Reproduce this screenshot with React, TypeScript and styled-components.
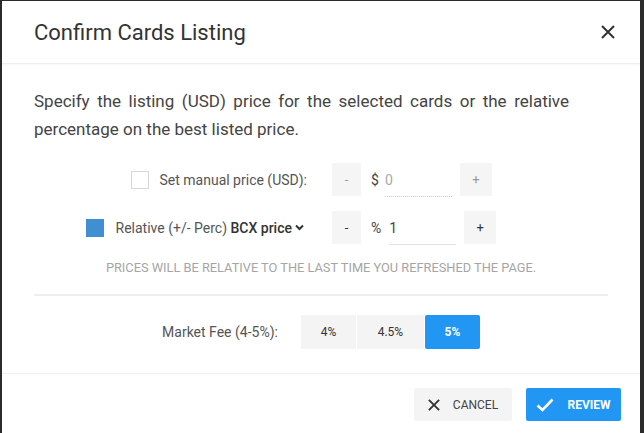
import styled, {createGlobalStyle} from 'styled-components';

const GlobalStyle = createGlobalStyle`
  html, body {
    margin: 0;
    padding: 0;
    background: #2b2b2b;
    font-family: Roboto, "Liberation Sans", sans-serif;
  }
`;

const Modal = styled.div`
  margin: 1px 0 0 2px;
  width: 638px;
  height: 440px;
  background: #fff;
  display: flex;
  flex-direction: column;
`;

const Header = styled.div`
  height: 62px;
  display: flex;
  align-items: center;
  justify-content: space-between;
  padding: 0 25px 0 32px;
  border-bottom: 1px solid #efefef;
  box-shadow: 0 1px 2px rgba(0, 0, 0, 0.04);
`;

const Title = styled.h2`
  margin: 0;
  font-size: 22px;
  font-weight: 400;
  color: #333;
`;

const CloseButton = styled.button`
  border: 0;
  background: none;
  padding: 0;
  width: 14px;
  height: 14px;
  display: flex;
  cursor: pointer;
`;

const Body = styled.div`
  padding: 23px 32px 24px;
`;

const Intro = styled.p`
  margin: 0;
  width: 535px;
  text-align: justify;
  font-size: 17px;
  line-height: 28px;
  color: #444;
`;

const PriceRow = styled.div<{$first?: boolean}>`
  display: grid;
  grid-template-columns: 273px auto;
  column-gap: 25px;
  align-items: center;
  height: 33px;
  margin-top: ${p => (p.$first ? '19px' : '15px')};
`;

const Option = styled.label`
  justify-self: end;
  display: flex;
  align-items: center;
  gap: 11px;
  font-size: 14px;
  color: #555;
`;

const Box = styled.span<{$checked?: boolean}>`
  width: 18px;
  height: 18px;
  box-sizing: border-box;
  border: 1px solid ${p => (p.$checked ? '#3f8fd2' : '#d6d6d6')};
  background: ${p => (p.$checked ? '#3f8fd2' : '#fff')};
  margin-right: ${p => (p.$checked ? '1px' : '0')};
`;

const Strong = styled.b`
  font-weight: 500;
  color: #333;
  display: inline-flex;
  align-items: center;
  gap: 3px;
  margin-right: 3px;
`;

const Stepper = styled.div`
  display: flex;
  align-items: center;
`;

const StepButton = styled.button<{$disabled?: boolean; $w: number}>`
  width: ${p => p.$w}px;
  height: 33px;
  border: 0;
  background: #f5f5f5;
  padding: 0;
  font-family: inherit;
  font-size: 13px;
  color: ${p => (p.$disabled ? '#999' : '#333')};
`;

const Unit = styled.span`
  margin-left: 10px;
  font-size: 14px;
  color: #444;
`;

const Field = styled.div<{$disabled?: boolean}>`
  margin: 2px 8px 0 ${p => (p.$disabled ? '6px' : '8px')};
  width: 67px;
  height: 33px;
  box-sizing: border-box;
  display: flex;
  align-items: center;
  font-size: 14px;
  color: ${p => (p.$disabled ? '#aaa' : '#444')};
  border-bottom: 1px ${p => (p.$disabled ? 'dotted #c8c8c8' : 'solid #e2e2e2')};
`;

const Note = styled.div`
  margin-top: 16px;
  text-align: center;
  font-size: 12.8px;
  line-height: 17px;
  color: #a5a5a5;
  text-transform: uppercase;
`;

const Divider = styled.hr`
  margin: 18px 0 0;
  border: 0;
  height: 2px;
  background: #eeeeee;
`;

const FeeRow = styled.div`
  margin-top: 19px;
  display: flex;
  justify-content: center;
  align-items: center;
  gap: 23px;
`;

const FeeLabel = styled.span`
  font-size: 14px;
  color: #555;
`;

const Segments = styled.div`
  display: flex;
  gap: 1px;
`;

const Segment = styled.button<{$active?: boolean; $w: number}>`
  width: ${p => p.$w}px;
  height: 34px;
  border: 0;
  border-radius: ${p => (p.$active ? '2px' : '0')};
  background: ${p => (p.$active ? '#2196f3' : '#f4f4f4')};
  color: ${p => (p.$active ? '#fff' : '#333')};
  font-family: inherit;
  font-size: 12px;
  font-weight: ${p => (p.$active ? 700 : 400)};
`;

const Footer = styled.div`
  border-top: 1px solid #f0f0f0;
  padding: 14px 19px 0;
  display: flex;
  justify-content: flex-end;
  gap: 14px;
`;

const ActionButton = styled.button<{$primary?: boolean; $w: number}>`
  width: ${p => p.$w}px;
  height: 33px;
  border: 0;
  border-radius: 2px;
  display: flex;
  align-items: center;
  justify-content: center;
  gap: 13px;
  padding: 0;
  background: ${p => (p.$primary ? '#2196f3' : '#f4f4f4')};
  color: ${p => (p.$primary ? '#fff' : '#444')};
  font-family: inherit;
  font-size: 12px;
  font-weight: ${p => (p.$primary ? 700 : 400)};
  text-transform: uppercase;
`;

const XIcon = ({size = 14, stroke = 2}: {size?: number; stroke?: number}) => (
  <svg width={size} height={size} viewBox="0 0 14 14">
    <path d="M1 1L13 13M13 1L1 13" stroke="#333" strokeWidth={stroke} />
  </svg>
);

const App = () => {
  return (
    <>
      <GlobalStyle />
      <Modal>
        <Header>
          <Title>Confirm Cards Listing</Title>
          <CloseButton>
            <XIcon />
          </CloseButton>
        </Header>
        <Body>
          <Intro>
            Specify the listing (USD) price for the selected cards or the relative percentage on the best
            listed price.
          </Intro>
          <PriceRow $first>
            <Option>
              <Box />
              Set manual price (USD):
            </Option>
            <Stepper>
              <StepButton $w={29} $disabled>-</StepButton>
              <Unit>$</Unit>
              <Field $disabled>0</Field>
              <StepButton $w={32} $disabled>+</StepButton>
            </Stepper>
          </PriceRow>
          <PriceRow>
            <Option>
              <Box $checked />
              <span>
                Relative (+/- Perc){' '}
                <Strong>
                  BCX price
                  <svg width="9" height="7" viewBox="0 0 9 7">
                    <path d="M1 1.5L4.5 5L8 1.5" stroke="#333" strokeWidth="2" fill="none" />
                  </svg>
                </Strong>
              </span>
            </Option>
            <Stepper>
              <StepButton $w={29}>-</StepButton>
              <Unit>%</Unit>
              <Field>1</Field>
              <StepButton $w={32}>+</StepButton>
            </Stepper>
          </PriceRow>
          <Note>Prices will be relative to the last time you refreshed the page.</Note>
          <Divider />
          <FeeRow>
            <FeeLabel>Market Fee (4-5%):</FeeLabel>
            <Segments>
              <Segment $w={55}>4%</Segment>
              <Segment $w={67}>4.5%</Segment>
              <Segment $w={55} $active>
                5%
              </Segment>
            </Segments>
          </FeeRow>
        </Body>
        <Footer>
          <ActionButton $w={98}>
            <XIcon size={12} stroke={2.2} />
            Cancel
          </ActionButton>
          <ActionButton $w={95} $primary>
            <svg width="18" height="14" viewBox="0 0 18 14">
              <path d="M1.5 7.5L6.5 12L16.5 1.5" stroke="#fff" strokeWidth="2.6" fill="none" />
            </svg>
            Review
          </ActionButton>
        </Footer>
      </Modal>
    </>
  );
};

export default App;
